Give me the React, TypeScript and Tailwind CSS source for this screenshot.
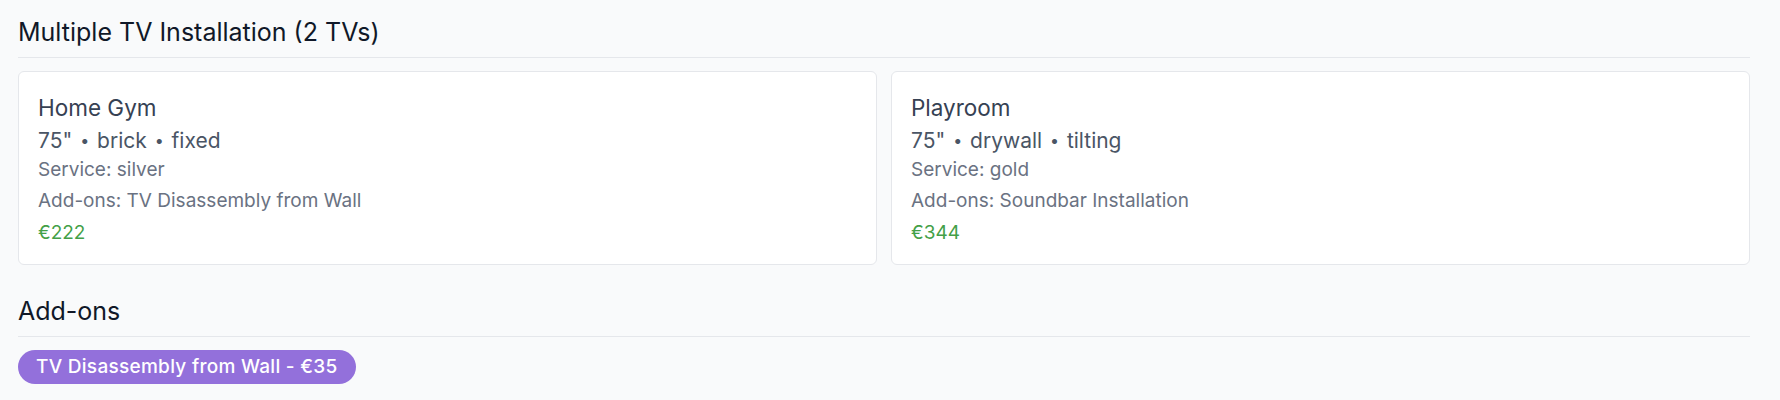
const tvs = [
  {
    room: 'Home Gym',
    size: '75"',
    wall: 'brick',
    mount: 'fixed',
    service: 'silver',
    addons: 'TV Disassembly from Wall',
    price: 222,
  },
  {
    room: 'Playroom',
    size: '75"',
    wall: 'drywall',
    mount: 'tilting',
    service: 'gold',
    addons: 'Soundbar Installation',
    price: 344,
  },
];

const addons = [{ name: 'TV Disassembly from Wall', price: 35 }];

function SectionTitle({ children }: { children: React.ReactNode }) {
  return (
    <h2 className="text-[25px] leading-[33px] font-normal text-gray-900 pb-2 border-b border-gray-200 mb-[13px]">
      {children}
    </h2>
  );
}

// small dot between the spec values
const Dot = () => <span className="text-[16px] align-[2px] px-[2px]">•</span>;

export default function App() {
  return (
    <div
      className="min-h-screen bg-gray-50 pt-4 pl-[18px] pr-[30px]"
      style={{ fontFamily: 'Inter, "Noto Sans", sans-serif' }}
    >
      <section>
        <SectionTitle>Multiple TV Installation ({tvs.length} TVs)</SectionTitle>
        <div className="grid grid-cols-2 gap-3.5">
          {tvs.map((tv) => (
            <div
              key={tv.room}
              className="bg-white border border-gray-200 rounded-md px-[19px] pt-5 pb-[18px]"
            >
              <div className="text-[22.5px] leading-[31px] font-normal text-gray-700">{tv.room}</div>
              <div className="text-[21px] leading-7 text-gray-600 mt-[3px]">
                {tv.size} <Dot /> {tv.wall} <Dot /> {tv.mount}
              </div>
              <div className="text-[19px] leading-[26px] text-gray-500 mt-[2px]">
                Service: {tv.service}
              </div>
              <div className="text-[19px] leading-[26px] text-gray-500 mt-[5px]">
                Add-ons: {tv.addons}
              </div>
              <div className="text-[19px] leading-[26px] text-[#43a047] mt-[6px]">€{tv.price}</div>
            </div>
          ))}
        </div>
      </section>

      <section className="mt-[30px]">
        <SectionTitle>Add-ons</SectionTitle>
        <div className="flex flex-wrap gap-2">
          {addons.map((a) => (
            <span
              key={a.name}
              className="inline-flex items-center h-[34px] px-[18px] rounded-full bg-[#9370db] text-white text-[19px] font-medium tracking-[0.015em]"
            >
              {a.name} - €{a.price}
            </span>
          ))}
        </div>
      </section>
    </div>
  );
}
